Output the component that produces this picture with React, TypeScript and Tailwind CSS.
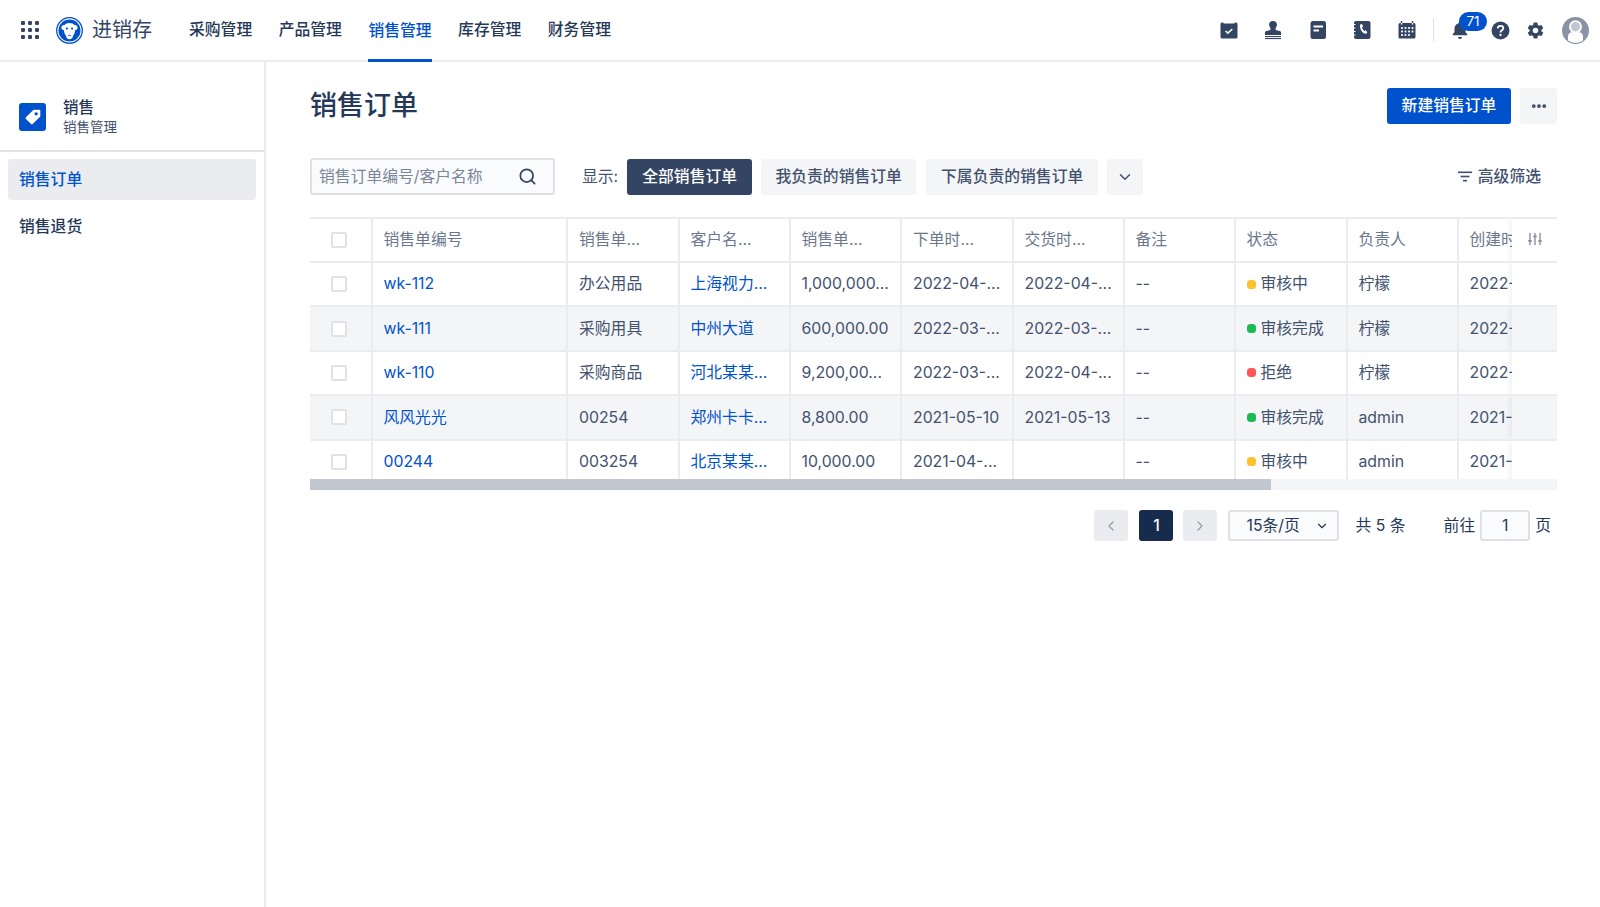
import React from 'react';
import { ChevronDown, ChevronLeft, ChevronRight, MoreHorizontal, Search } from 'lucide-react';

const NAV = ['采购管理', '产品管理', '销售管理', '库存管理', '财务管理'];

const COLUMNS = ['销售单编号', '销售单...', '客户名...', '销售单...', '下单时...', '交货时...', '备注', '状态', '负责人', '创建时间'];

const ROWS = [
  { no: 'wk-112', type: '办公用品', customer: '上海视力...', amount: '1,000,000...', order: '2022-04-...', due: '2022-04-...', status: '审核中', dot: 'bg-[#ffc02e]', owner: '柠檬', created: '2022-' },
  { no: 'wk-111', type: '采购用具', customer: '中州大道', amount: '600,000.00', order: '2022-03-...', due: '2022-03-...', status: '审核完成', dot: 'bg-[#1db954]', owner: '柠檬', created: '2022-' },
  { no: 'wk-110', type: '采购商品', customer: '河北某某...', amount: '9,200,00...', order: '2022-03-...', due: '2022-04-...', status: '拒绝', dot: 'bg-[#ff5656]', owner: '柠檬', created: '2022-' },
  { no: '风风光光', type: '00254', customer: '郑州卡卡...', amount: '8,800.00', order: '2021-05-10', due: '2021-05-13', status: '审核完成', dot: 'bg-[#1db954]', owner: 'admin', created: '2021-' },
  { no: '00244', type: '003254', customer: '北京某某...', amount: '10,000.00', order: '2021-04-...', due: '', status: '审核中', dot: 'bg-[#ffc02e]', owner: 'admin', created: '2021-' },
];

const GRID = 'grid grid-cols-[62.5px_195.5px_111.5px_111px_111.5px_111.5px_111px_111px_112px_111px_1fr]';
const CELL = 'flex items-center pl-[11px] pr-[8px] border-r-2 border-[#ebecf0] whitespace-nowrap';
const CHECK_CELL = 'flex items-center pl-[21px] border-r-2 border-[#ebecf0]';

const AppsIcon = () => (
  <svg width="18" height="18" viewBox="0 0 18 18" fill="#344563">
    {[2, 9, 16].map((y) => [2, 9, 16].map((x) => <rect key={`${x}-${y}`} x={x - 2} y={y - 2} width="4" height="4" rx="1.2" />))}
  </svg>
);

const Logo = () => (
  <svg width="27" height="27" viewBox="0 0 27 27">
    <circle cx="13.500" cy="13.500" r="12.800" fill="#fff" stroke="#0052cc" strokeWidth="1.300" />
    <circle cx="13.500" cy="13.500" r="11" fill="#0052cc" />
    <path d="M13.500 6c2.300 0 4 .8 5 1.900 1.800-.2 3.100.9 3.100 2.500 0 1.500-1.100 2.600-2.500 2.700-.2 2.700-1 4.700-2.200 5.900.2 1.700-1.500 3.300-3.400 3.300s-3.600-1.600-3.400-3.300c-1.200-1.200-2-3.200-2.200-5.900-1.400-.1-2.500-1.200-2.500-2.700 0-1.600 1.300-2.700 3.100-2.500 1-1.100 2.700-1.900 5-1.900z" fill="#fff" />
    <circle cx="10.900" cy="11.600" r="1.100" fill="#0052cc" />
    <circle cx="16.100" cy="11.600" r="1.100" fill="#0052cc" />
    <path d="M12 18.400h3" stroke="#0052cc" strokeWidth="0.800" />
  </svg>
);

const TaskIcon = () => (
  <svg width="20" height="20" viewBox="0 0 20 20">
    <path d="M3 2.500h1.500v1h11v-1H17a1.500 1.500 0 0 1 1.500 1.500v13a1.500 1.500 0 0 1-1.500 1.500H3A1.500 1.500 0 0 1 1.500 17V4A1.500 1.500 0 0 1 3 2.500z" fill="#344563" />
    <path d="M6.600 11l2.300 2.200 4.400-4.200" fill="none" stroke="#fff" strokeWidth="1.600" />
  </svg>
);

const StampIcon = () => (
  <svg width="20" height="20" viewBox="0 0 20 20" fill="#344563">
    <path d="M10 1c2.400 0 4 1.600 4 3.700 0 1.600-1.200 2.600-1.500 4-.1.600.2 1.300 1 1.500l3.200.8c.9.200 1.400.9 1.400 1.800V15H2v-2.200c0-.9.500-1.600 1.400-1.800l3.200-.8c.8-.2 1.100-.9 1-1.500-.3-1.400-1.500-2.400-1.500-4C6 2.600 7.600 1 10 1z" />
    <rect x="2" y="16" width="16" height="1.100" />
    <rect x="2" y="18" width="16" height="1.100" />
  </svg>
);

const NoteIcon = () => (
  <svg width="20" height="20" viewBox="0 0 20 20">
    <rect x="2.500" y="1" width="15.500" height="18" rx="2.500" fill="#344563" />
    <rect x="5.500" y="5.500" width="9.500" height="2" fill="#fff" />
    <rect x="5.500" y="9.500" width="5.500" height="2" fill="#fff" />
  </svg>
);

const PhoneBookIcon = () => (
  <svg width="20" height="20" viewBox="0 0 20 20">
    <rect x="2" y="1" width="16.500" height="18" rx="2" fill="#344563" />
    <path d="M1.500 4.500h2M1.500 8h2M1.500 11.500h2M1.500 15h2" stroke="#fff" strokeWidth="1" />
    <path d="M8.200 4.500l1.800-.5 1 2.600-1 1c.3 1.300 1.200 2.600 2.400 3.300l1.200-.7 1.800 2.100-1.200 1.500c-3.500.3-7-5-6-9.300z" fill="#fff" />
  </svg>
);

const CalendarIcon = () => (
  <svg width="20" height="20" viewBox="0 0 20 20">
    <path d="M4.500 1v2M15.500 1v2" stroke="#344563" strokeWidth="1.400" fill="none" />
    <path d="M3 3h.8v1.500h1.500V3h9.400v1.500h1.500V3h.8a1.500 1.500 0 0 1 1.500 1.500V17a1.500 1.500 0 0 1-1.500 1.500H3A1.500 1.500 0 0 1 1.500 17V4.500A1.500 1.500 0 0 1 3 3z" fill="#344563" />
    {[8, 11.500].map((y) => [5, 8.500, 12, 15.500].map((x) => <rect key={`${x}-${y}`} x={x - 0.9} y={y - 0.9} width="1.800" height="1.800" fill="#fff" />))}
    {[5, 8.500, 12].map((x) => <rect key={x} x={x - 0.9} y={14.100} width="1.800" height="1.800" fill="#fff" />)}
  </svg>
);

const BellIcon = () => (
  <svg width="20" height="20" viewBox="0 0 20 20" fill="#344563">
    <path d="M10 1.500c.8 0 1.300.6 1.300 1.300v.5c2.600.6 4.200 2.800 4.200 5.500v3.500l1.800 2v1H2.700v-1l1.800-2V8.800c0-2.700 1.600-4.900 4.200-5.500v-.5c0-.7.500-1.300 1.300-1.300z" />
    <path d="M8 17h4a2 2 0 0 1-4 0z" />
  </svg>
);

const HelpIcon = () => (
  <svg width="19" height="19" viewBox="0 0 19 19">
    <circle cx="9.500" cy="9.500" r="9" fill="#344563" />
    <path d="M6.700 7.400c.1-1.700 1.300-2.500 2.800-2.500 1.600 0 2.800.9 2.800 2.300 0 2.100-2.800 2.100-2.800 4.200" fill="none" stroke="#fff" strokeWidth="1.800" />
    <circle cx="9.500" cy="14" r="1.150" fill="#fff" />
  </svg>
);

const GearIcon = () => (
  <svg width="19" height="19" viewBox="0 0 24 24" fill="#344563">
    <path fillRule="evenodd" d="M19.430 12.980c.04-.32.07-.64.07-.98s-.03-.66-.07-.98l2.110-1.650a.5.500 0 0 0 .12-.64l-2-3.460a.5.500 0 0 0-.61-.22l-2.490 1a7.300 7.300 0 0 0-1.690-.98l-.38-2.650A.49.490 0 0 0 14 2h-4a.49.490 0 0 0-.49.420l-.38 2.650c-.61.25-1.170.59-1.690.98l-2.490-1a.5.500 0 0 0-.61.220l-2 3.460a.49.490 0 0 0 .12.640l2.110 1.650c-.04.32-.07.65-.07.98s.03.660.07.98l-2.110 1.650a.5.500 0 0 0-.12.640l2 3.460c.12.220.39.300.61.220l2.490-1c.52.400 1.080.730 1.690.980l.38 2.650c.03.240.24.420.49.420h4c.25 0 .46-.18.49-.42l.38-2.650c.61-.25 1.170-.59 1.690-.98l2.490 1c.23.090.49 0 .61-.22l2-3.460a.5.500 0 0 0-.12-.64zM12 15.500a3.500 3.500 0 1 1 0-7 3.500 3.500 0 0 1 0 7z" />
  </svg>
);

const AvatarIcon = () => (
  <svg width="27" height="27" viewBox="0 0 27 27">
    <circle cx="13.500" cy="13.500" r="13.500" fill="#8993a4" />
    <circle cx="13.500" cy="9.800" r="5.600" fill="#c1c7d0" stroke="#fff" strokeWidth="1.800" />
    <path d="M6 23.500v-4.300c0-2.300 1.700-4 4-4h7c2.300 0 4 1.700 4 4v4.300a13 13 0 0 1-15 0z" fill="#fff" />
  </svg>
);

const TagIcon = () => (
  <svg width="18" height="18" viewBox="0 0 16 16">
    <path d="M8.500 1.500h5.200a.8.800 0 0 1 .8.800v5.200L7.700 14.300a1 1 0 0 1-1.400 0L1.700 9.700a1 1 0 0 1 0-1.400z" fill="#fff" />
    <circle cx="10.800" cy="5.200" r="1.500" fill="#0052cc" />
  </svg>
);

const FilterIcon = () => (
  <svg width="14" height="11" viewBox="0 0 14 11" fill="#42526e">
    <rect x="0" y="0.500" width="14" height="1.600" />
    <rect x="2.500" y="4.700" width="9" height="1.600" />
    <rect x="5" y="8.900" width="4" height="1.600" />
  </svg>
);

const SlidersIcon = () => (
  <svg width="14" height="14" viewBox="0 0 14 14" stroke="#8993a4" strokeWidth="1.400" fill="none">
    <path d="M2 1v12M7 1v12M12 1v12" />
    <path d="M0.300 9h3.400M5.300 4.500h3.400M10.300 9h3.400" strokeWidth="1.800" />
  </svg>
);

const TopBar = () => (
  <header className="flex h-[62px] shrink-0 items-stretch border-b-2 border-[#ebecf0] bg-white">
    <div className="flex items-center pl-[21px]">
      <AppsIcon />
      <div className="ml-[17px]">
        <Logo />
      </div>
      <span className="ml-[9px] text-[20px] text-[#344563]">进销存</span>
    </div>
    <nav className="ml-[37px] flex gap-[26.500px]">
      {NAV.map((item) => (
        <a
          key={item}
          className={
            item === '销售管理'
              ? 'flex items-center border-b-[3px] border-[#0052cc] pt-[2px] text-[15.800px] font-medium text-[#0052cc] -mb-[2px]'
              : 'flex items-center text-[15.800px] font-medium text-[#253858]'
          }
        >
          {item}
        </a>
      ))}
    </nav>
    <div className="ml-auto flex items-center pr-[11px]">
      <div className="flex items-center gap-[24.500px]">
        <TaskIcon />
        <StampIcon />
        <NoteIcon />
        <PhoneBookIcon />
        <CalendarIcon />
      </div>
      <div className="ml-[16px] h-[22px] w-px bg-[#dfe1e6]" />
      <div className="relative ml-[16.500px] mr-[21px]">
        <BellIcon />
        <span className="absolute -right-[17px] -top-[8px] flex h-[19px] w-[28px] items-center justify-center rounded-full bg-[#0052cc] text-[13.500px] text-white">71</span>
      </div>
      <HelpIcon />
      <div className="ml-[16px] mr-[17px]">
        <GearIcon />
      </div>
      <AvatarIcon />
    </div>
  </header>
);

const Sidebar = () => (
  <aside className="w-[266px] shrink-0 border-r-2 border-[#ebecf0] bg-white">
    <div className="flex h-[90px] items-center border-b-2 border-[#dfe1e6] pl-[19px] pt-[21px]">
      <div className="flex h-[28px] w-[27px] items-center justify-center rounded-[3px] bg-[#0052cc]">
        <TagIcon />
      </div>
      <div className="ml-[17px] flex flex-col">
        <span className="text-[15.500px] leading-[21px] font-medium text-[#253858]">销售</span>
        <span className="text-[13.500px] leading-[19px] text-[#42526e]">销售管理</span>
      </div>
    </div>
    <div className="flex flex-col gap-[6px] px-[8px] pt-[7px]">
      <div className="flex h-[41px] items-center rounded-[3px] bg-[#ebecf0] pl-[11px] text-[15.800px] font-medium text-[#0052cc]">销售订单</div>
      <div className="flex h-[41px] items-center pl-[11px] text-[15.800px] font-medium text-[#253858]">销售退货</div>
    </div>
  </aside>
);

const Checkbox = () => <span className="block h-[16px] w-[16px] rounded-[2px] border-2 border-[#dfe1e6] bg-white" />;

const OrderTable = () => (
  <div className="relative mt-[22px] overflow-hidden border-t-2 border-[#ebecf0]">
    <div className={`${GRID} h-[44px] border-b-2 border-[#ebecf0] bg-white text-[15.800px] text-[#6b778c]`}>
      <div className={CHECK_CELL}>
        <Checkbox />
      </div>
      {COLUMNS.slice(0, 9).map((c, i) => (
        <div key={i} className={CELL}>{c}</div>
      ))}
      <div className="relative flex items-center overflow-hidden pl-[11px] whitespace-nowrap">
        {COLUMNS[9]}
        <div className="absolute inset-y-0 right-0 flex w-[45px] items-start justify-center bg-white pt-[13px] pl-[1px] shadow-[-3px_0_4px_rgba(9,30,66,0.05)]">
          <SlidersIcon />
        </div>
      </div>
    </div>
    <div className="h-[216px] overflow-hidden">
      {ROWS.map((r, i) => (
        <div key={r.no} className={`${GRID} h-[44.400px] border-b-2 border-[#ebecf0] text-[15.800px] text-[#42526e] ${i % 2 === 1 ? 'bg-[#f4f5f7]' : 'bg-white'}`}>
          <div className={CHECK_CELL}>
            <Checkbox />
          </div>
          <div className={`${CELL} text-[#0052cc]`}>{r.no}</div>
          <div className={CELL}>{r.type}</div>
          <div className={`${CELL} text-[#0052cc]`}>{r.customer}</div>
          <div className={CELL}>{r.amount}</div>
          <div className={CELL}>{r.order}</div>
          <div className={CELL}>{r.due}</div>
          <div className={CELL}>--</div>
          <div className={CELL}>
            <span className={`mr-[5px] h-[9px] w-[9px] rounded-[3.500px] ${r.dot}`} />
            {r.status}
          </div>
          <div className={CELL}>{r.owner}</div>
          <div className="relative flex items-center overflow-hidden bg-inherit pl-[11px] whitespace-nowrap">
            {r.created}
            <div className="absolute inset-y-0 right-0 w-[45px] bg-inherit shadow-[-3px_0_4px_rgba(9,30,66,0.05)]" />
          </div>
        </div>
      ))}
    </div>
    <div className="h-[11px] bg-[#f4f5f7]">
      <div className="h-full w-[961px] bg-[#c1c7d0]" />
    </div>
  </div>
);

const Pagination = () => (
  <div className="mt-[20px] flex h-[31px] items-center justify-end pr-[6px] text-[15.800px] text-[#253858]">
    <button className="flex h-full w-[34px] items-center justify-center rounded-[3px] bg-[#ebecf0] text-[#97a0af]">
      <ChevronLeft size={16} />
    </button>
    <button className="ml-[11px] flex h-full w-[34px] items-center justify-center rounded-[3px] bg-[#172b4d] font-medium text-white">1</button>
    <button className="ml-[10px] flex h-full w-[34px] items-center justify-center rounded-[3px] bg-[#ebecf0] text-[#97a0af]">
      <ChevronRight size={16} />
    </button>
    <div className="ml-[11px] flex h-full w-[111px] items-center justify-between rounded-[3px] border-2 border-[#dfe1e6] bg-[#fafbfc] pl-[16px] pr-[8px] text-[#253858]">
      <span>15条/页</span>
      <ChevronDown size={14} />
    </div>
    <span className="ml-[16px]">共 5 条</span>
    <span className="ml-[38px]">前往</span>
    <div className="ml-[5px] flex h-full w-[50px] items-center justify-center rounded-[3px] border-2 border-[#dfe1e6] bg-[#fafbfc]">1</div>
    <span className="ml-[5px]">页</span>
  </div>
);

export default function App() {
  return (
    <div className="flex h-[907px] flex-col overflow-hidden bg-white font-['Inter','Noto_Sans_CJK_SC',sans-serif] antialiased">
      <TopBar />
      <div className="flex min-h-0 flex-1">
        <Sidebar />
        <main className="min-w-0 flex-1 pl-[44px] pr-[43px]">
          <div className="flex h-[96px] items-start justify-between pt-[26px]">
            <h1 className="text-[27px] leading-[36px] font-medium text-[#253858]">销售订单</h1>
            <div className="flex gap-[9px]">
              <button className="flex h-[36px] w-[124px] items-center justify-center rounded-[3px] bg-[#0052cc] text-[15.800px] font-medium text-white">新建销售订单</button>
              <button className="flex h-[36px] w-[37px] items-center justify-center rounded-[3px] bg-[#f4f5f7] text-[#344563]">
                <MoreHorizontal size={18} strokeWidth={3} />
              </button>
            </div>
          </div>
          <div className="flex h-[37px] items-center">
            <div className="flex h-full w-[245px] items-center justify-between rounded-[3px] border-2 border-[#dfe1e6] bg-[#fafbfc] pl-[7px] pr-[16px]">
              <span className="text-[15.800px] text-[#7a869a]">销售订单编号/客户名称</span>
              <Search size={19} strokeWidth={2.200} className="text-[#344563]" />
            </div>
            <span className="ml-[27px] text-[15.800px] text-[#42526e]">显示:</span>
            <button className="ml-[9px] flex h-[36px] w-[125px] items-center justify-center rounded-[3px] bg-[#344563] text-[15.800px] font-medium text-white">全部销售订单</button>
            <button className="ml-[9px] flex h-[36px] w-[155px] items-center justify-center rounded-[3px] bg-[#f4f5f7] text-[15.800px] font-medium text-[#42526e]">我负责的销售订单</button>
            <button className="ml-[10px] flex h-[36px] w-[172px] items-center justify-center rounded-[3px] bg-[#f4f5f7] text-[15.800px] font-medium text-[#42526e]">下属负责的销售订单</button>
            <button className="ml-[9px] flex h-[36px] w-[36px] items-center justify-center rounded-[3px] bg-[#f4f5f7] text-[#42526e]">
              <ChevronDown size={18} />
            </button>
            <div className="ml-auto flex items-center gap-[6px] pr-[16px] text-[15.800px] font-medium text-[#42526e]">
              <FilterIcon />
              <span>高级筛选</span>
            </div>
          </div>
          <OrderTable />
          <Pagination />
        </main>
      </div>
    </div>
  );
}
